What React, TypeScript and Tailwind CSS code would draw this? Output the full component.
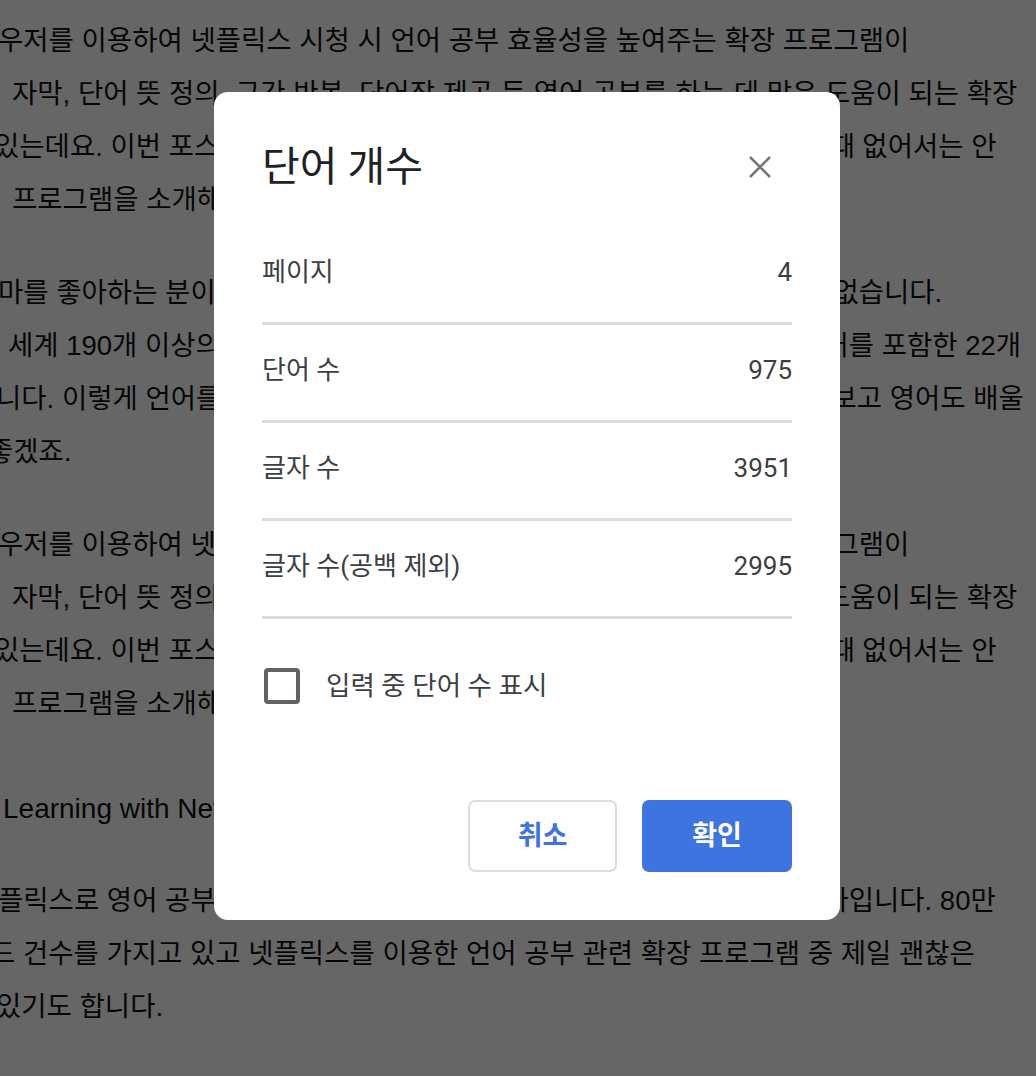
const docFont = { fontFamily: '"Liberation Sans", "Noto Sans CJK KR", sans-serif' };

type Line = { text: string; cls: string };

const para1: Line[] = [
  { text: '우저를 이용하여 넷플릭스 시청 시 언어 공부 효율성을 높여주는 확장 프로그램이', cls: '-ml-[2px]' },
  { text: '자막, 단어 뜻 정의, 구간 반복, 단어장 제공 등 영어 공부를 하는 데 많은 도움이 되는 확장', cls: 'ml-[12px]' },
  { text: '있는데요. 이번 포스팅에서는 넷플릭스를 이용하여 제대로 영어 공부를 할 때 없어서는 안', cls: '-ml-[6px]' },
  { text: '프로그램을 소개해 드리겠습니다.', cls: 'ml-[12px]' },
];

const para2: Line[] = [
  { text: '마를 좋아하는 분이라면 넷플릭스를 한 번쯤 이용해 보시지 않으신 분들은 없습니다.', cls: '-ml-[2px]' },
  { text: '세계 190개 이상의 국가에서 서비스되고 있는 넷플릭스에서는 현재 한국어를 포함한 22개', cls: 'ml-[8px]' },
  { text: '니다. 이렇게 언어를 다양하게 지원하기 때문에 재미있는 외국 드라마들도 보고 영어도 배울', cls: '-ml-[4px]' },
  { text: '좋겠죠.', cls: '-ml-[12px]' },
];

const para4: Line[] = [
  { text: '플릭스로 영어 공부를 할 때 가장 많이 사용하는 크롬 확장 프로그램 중 하나입니다. 80만', cls: '-ml-[2px]' },
  { text: '드 건수를 가지고 있고 넷플릭스를 이용한 언어 공부 관련 확장 프로그램 중 제일 괜찮은', cls: '-ml-[10px]' },
  { text: '있기도 합니다.', cls: '-ml-[4px]' },
];

function Para({ lines, className = '' }: { lines: Line[]; className?: string }) {
  return (
    <div className={`mb-[40px] ${className}`}>
      {lines.map((l, i) => (
        <div key={i} className={`whitespace-nowrap leading-[53px] ${l.cls}`}>
          {l.text}
        </div>
      ))}
    </div>
  );
}

const rows = [
  { label: '페이지', value: '4' },
  { label: '단어 수', value: '975' },
  { label: '글자 수', value: '3951' },
  { label: '글자 수(공백 제외)', value: '2995' },
];

export default function App() {
  return (
    <div className="relative w-full h-[1076px] overflow-hidden bg-white">
      {/* document behind the dialog */}
      <div className="pt-[14px] text-[27.5px] text-[#111]" style={docFont}>
        <Para lines={para1} />
        <Para lines={para2} />
        <Para lines={para1} className="mb-[52px]" />
        <div className="whitespace-nowrap leading-[53px] text-[28px] ml-[3px] mb-[39px]">Learning with Netflix</div>
        <Para lines={para4} />
      </div>

      <div className="absolute inset-0 bg-black/60" />

      <div
        className="absolute left-[214px] top-[92px] w-[626px] h-[828px] bg-white rounded-[14px] px-[48px] flex flex-col"
        style={{ fontFamily: 'Roboto, "Noto Sans CJK KR", sans-serif' }}
      >
        <div className="flex items-center justify-between pt-[52px]">
          <h2 className="text-[41px] leading-[46px] text-[#202124] font-normal">단어 개수</h2>
          <button className="w-[44px] h-[44px] mr-[10px] flex items-center justify-center">
            <svg width="22" height="22" viewBox="0 0 22 22" fill="none" stroke="#757575" strokeWidth="2.6">
              <path d="M1 1 L21 21 M21 1 L1 21" />
            </svg>
          </button>
        </div>

        <div className="mt-[37px]">
          {rows.map((r) => (
            <div key={r.label}>
              <div className="h-[95px] pb-[5px] flex items-center justify-between text-[26px] text-[#3c4043]">
                <span>{r.label}</span>
                <span>{r.value}</span>
              </div>
              <div className="h-[3px] bg-[#dadce0]" />
            </div>
          ))}
        </div>

        <label className="flex items-center mt-[47px] ml-[2px]">
          <span className="w-[36px] h-[36px] border-[4px] border-[#5f6368] rounded-[4px]" />
          <span className="ml-[26px] text-[26.5px] text-[#3c4043]">입력 중 단어 수 표시</span>
        </label>

        <div className="mt-auto pb-[48px] flex justify-end gap-[25px]">
          <button className="w-[149px] h-[72px] rounded-[7px] border-2 border-[#dadce0] bg-white text-[#3e74e0] text-[27px] font-bold">
            취소
          </button>
          <button className="w-[150px] h-[72px] rounded-[7px] bg-[#3e74e0] text-white text-[27px] font-bold">
            확인
          </button>
        </div>
      </div>
    </div>
  );
}
